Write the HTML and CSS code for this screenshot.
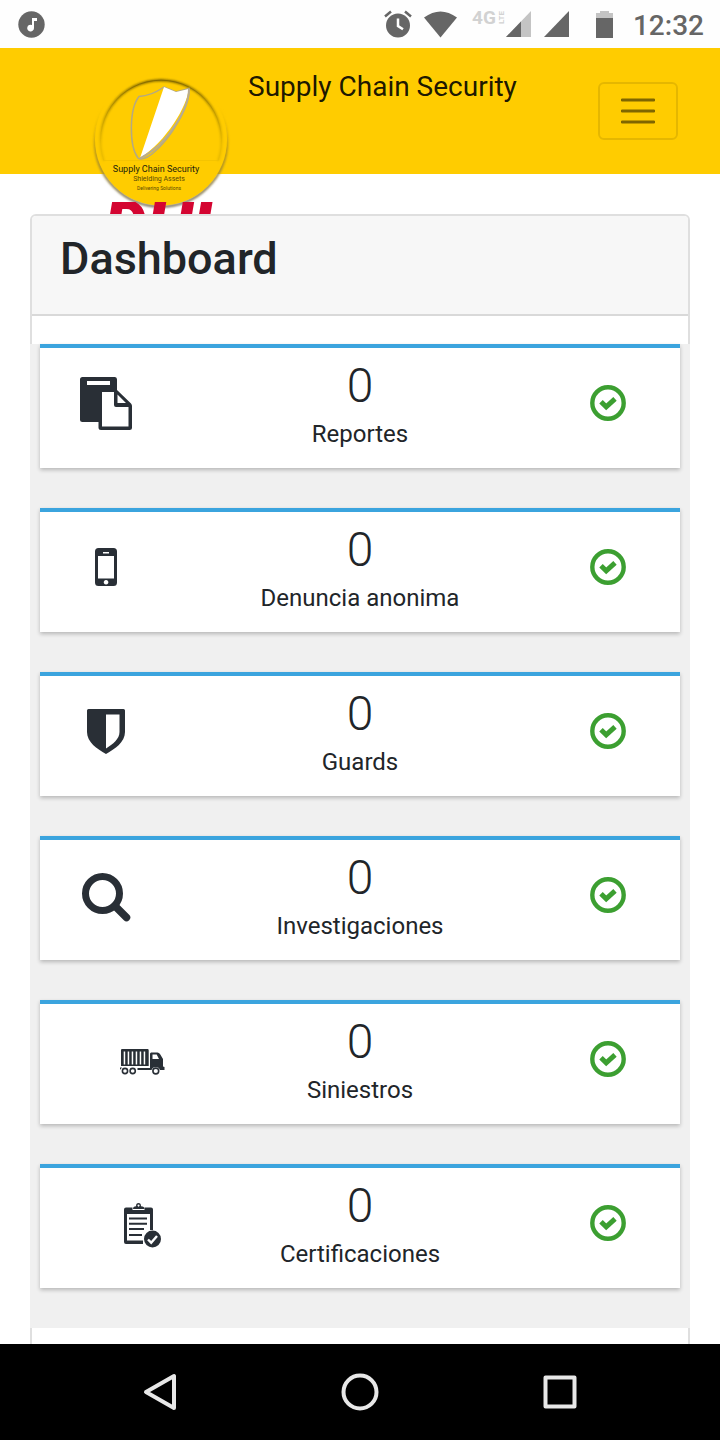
FILE: index.html
```
<!DOCTYPE html>
<html lang="es">
<head>
<meta charset="utf-8">
<meta name="viewport" content="width=device-width, initial-scale=1">
<title>Supply Chain Security</title>
<link rel="stylesheet" href="styles.css">
</head>
<body>
<svg width="0" height="0" class="sprite" aria-hidden="true">
  <symbol id="check" viewBox="0 0 36 36">
    <circle cx="18" cy="18" r="15.700" fill="none" stroke="#3c9f31" stroke-width="4.400"/>
    <path d="M11 16.800l5.200 5L25 13.800" fill="none" stroke="#3c9f31" stroke-width="5"/>
  </symbol>
</svg>

<div class="status">
  <svg class="note" viewBox="0 0 27 27"><circle cx="13.500" cy="13.500" r="13.200"/><path d="M14 7h5v3h-3v7a3.400 3.400 0 1 1-2-3z" fill="#fff"/></svg>
  <svg class="alarm" viewBox="0 0 28 28"><circle cx="14" cy="15.500" r="12"/><path d="M1 6.500L7 1.500M27 6.500L21 1.500" stroke="#666" stroke-width="2.500"/><path d="M14 8.500v7.500l5 3.200" fill="none" stroke="#fff" stroke-width="2.500"/></svg>
  <svg class="wifi" viewBox="0 0 33 27"><path d="M0 6.500Q16.500-5.500 33 6.500L16.500 26.500z"/></svg>
  <svg class="network" viewBox="0 0 34 28"><text x="0" y="14" class="net-main">4G</text><text transform="translate(32 14) rotate(-90)" class="net-sub">LTE</text></svg>
  <svg class="signal" viewBox="0 0 25 26"><path d="M25 0v26H0z" fill="#c4c4c4"/><path d="M15 10.400V26H0z"/></svg>
  <svg class="signal signal-full" viewBox="0 0 25 26"><path d="M25 0v26H0z"/></svg>
  <svg class="battery" viewBox="0 0 17 27"><path d="M0 2h4V0h9v2h4v6H0z" fill="#c4c4c4"/><path d="M0 7h17v20H0z"/></svg>
  <time class="clock">12:32</time>
</div>

<header class="topbar">
  <a href="#" class="brand" aria-label="Supply Chain Security">
    <svg class="brand-mark" viewBox="0 0 160 160">
      <defs>
        <linearGradient id="rim" x1="0" y1="0" x2="0" y2="1">
          <stop offset="0" stop-color="#6b5600"/><stop offset=".4" stop-color="#b89400"/><stop offset=".8" stop-color="#e8ba00"/>
        </linearGradient>
        <linearGradient id="edge" x1="0" y1="0" x2="0" y2="1">
          <stop offset="0" stop-color="#fc0" stop-opacity="0"/><stop offset=".2" stop-color="#fc0" stop-opacity="0"/><stop offset=".55" stop-color="#b8961a"/><stop offset="1" stop-color="#77705c"/>
        </linearGradient>
        <filter id="soft" x="-10%" y="-10%" width="120%" height="120%"><feGaussianBlur stdDeviation="1"/></filter>
      </defs>
      <circle cx="81" cy="80.500" r="66" fill="none" stroke="url(#edge)" stroke-width="2.500" filter="url(#soft)"/>
      <circle cx="81" cy="79.500" r="66" fill="#fc0"/>
      <path d="M24 101A60.500 60.500 0 1 1 138 101" fill="none" stroke="url(#rim)" stroke-width="2" filter="url(#soft)"/>
      <path d="M24 101A60.500 60.500 0 1 1 138 101" fill="none" stroke="url(#rim)" stroke-width=".6"/>
      <path d="M24 100.500h114" stroke="#efc000" stroke-width=".6"/>
      <path d="M59 36.500Q71 36 84 27L96 32L109 28.500C110 45 92 78 72 94C66 99 60 100 58 98C49 86 49 49 59 36.500z" fill="#fc0" stroke="#b5a982" stroke-width="1.500"/>
      <path d="M84 27L96 32L108.500 29C108 45 86 82 60 98z" fill="#fff"/>
      <path d="M109 29C109 47 89 84 60 98.500" fill="none" stroke="#b8ac91" stroke-width="2"/>
      <text x="76" y="112" class="brand-name">Supply Chain Security</text>
      <text x="79" y="121" class="brand-line">Shielding Assets</text>
      <text x="79" y="130" class="brand-small">Delivering Solutions</text>
    </svg>
    <span class="partner">DHL</span>
  </a>
  <span class="app-name">Supply Chain Security</span>
  <button class="menu" type="button" aria-label="Menu">
    <svg viewBox="0 0 34 26"><path d="M1 2h32M1 13h32M1 24h32" stroke="#000" stroke-opacity=".5" stroke-width="2.800" stroke-linecap="round"/></svg>
  </button>
</header>

<main class="content">
  <section class="panel">
    <h1 class="panel-title">Dashboard</h1>
    <div class="panel-body">
      <div class="tiles">
        <article class="tile">
          <span class="icon"><svg width="52" height="53" viewBox="0 0 52 53"><path fill-rule="evenodd" d="M2.500 0H35Q37 0 37 2.500V13L51 26.500Q52 27.500 52 29V50.500Q52 53 49.500 53H21Q18.500 53 18.500 50.500V45H2.500Q0 45 0 42.500V2.500Q0 0 2.500 0zM7 4v4h23V4zM22 15v34.500h26.500V30H36Q34 30 34 28V15zM37.500 17.500v8.500h8.500z"/></svg></span>
          <div class="figure"><strong>0</strong><span>Reportes</span></div>
          <svg class="ok"><use href="#check"/></svg>
        </article>
        <article class="tile">
          <span class="icon"><svg width="22" height="38" viewBox="0 0 22 38"><path fill-rule="evenodd" d="M3.500 0h15Q22 0 22 3.500v31Q22 38 18.500 38h-15Q0 38 0 34.500v-31Q0 0 3.500 0zM8 4v1.500h6V4zM3 8v22.500h16V8zM11 32a2.300 2.300 0 1 0 .1 0z"/></svg></span>
          <div class="figure"><strong>0</strong><span>Denuncia anonima</span></div>
          <svg class="ok"><use href="#check"/></svg>
        </article>
        <article class="tile">
          <span class="icon"><svg width="38" height="45" viewBox="0 0 38 45"><path fill-rule="evenodd" d="M1.500 0h35Q38 0 38 1.500V23C38 33 28 40 19 45C10 40 0 33 0 23V1.500Q0 0 1.500 0zM19 5.500V39.500C26 35 32.500 30 32.500 23V5.500z"/></svg></span>
          <div class="figure"><strong>0</strong><span>Guards</span></div>
          <svg class="ok"><use href="#check"/></svg>
        </article>
        <article class="tile">
          <span class="icon"><svg width="49" height="53" viewBox="0 0 49 53"><g fill="none" stroke="#292f36"><circle cx="20.500" cy="24.500" r="17" stroke-width="7"/><path d="M33 37l11.500 11.500" stroke-width="7.500" stroke-linecap="round"/></g></svg></span>
          <div class="figure"><strong>0</strong><span>Investigaciones</span></div>
          <svg class="ok"><use href="#check"/></svg>
        </article>
        <article class="tile">
          <span class="icon icon-inset"><svg width="45" height="26" viewBox="0 0 45 26"><path fill-rule="evenodd" d="M2 0h25.500q1.200 0 1.200 1.200V17H1V1.200Q1 0 2 0zM3.700 2.500v13h1.500v-13zM7.700 2.500v13h1.500v-13zM11.700 2.500v13h1.500v-13zM15.700 2.500v13h1.500v-13zM19.700 2.500v13h1.500v-13zM23.700 2.500v13h1.500v-13zM31 3.500h6.500q1.500 0 2.500 1.500l3 5v7.500l1.500 .5v3h-4.500a4.500 4.500 0 0 0-8.500 0H17.500v-2H30V4.500zM32.500 5.500v4.500h6.500l-2.300-4.500zM0 18.500h2l-1.500 2H0z"/><g fill="none" stroke="#292f36" stroke-width="1.600"><circle cx="5" cy="22" r="2.600"/><circle cx="12.700" cy="22" r="2.600"/><circle cx="35.800" cy="22" r="2.900"/></g></svg></span>
          <div class="figure"><strong>0</strong><span>Siniestros</span></div>
          <svg class="ok"><use href="#check"/></svg>
        </article>
        <article class="tile">
          <span class="icon icon-inset"><svg width="37" height="46" viewBox="0 0 37 46"><path fill-rule="evenodd" d="M2 4.500h6.500v2.500h12V4.500H27q2 0 2 2V27h-3V11H3v26.500h16V41H2q-2 0-2-2V6.500q0-2 2-2z"/><path fill-rule="evenodd" d="M9 6q0-2.800 3-2.800Q12 0 14.500 0T17 3.200q3.500 0 3.500 2.800zM14.500 1.500a1 1 0 1 0 .1 0z"/><path d="M5 15.500h18M5 20.700h18M5 26h15M5 32h13" stroke="#292f36" stroke-width="1.900"/><circle cx="28.500" cy="36" r="8.500"/><path d="M24 36.500l3.200 3.200L33 33" fill="none" stroke="#fff" stroke-width="2.400"/></svg></span>
          <div class="figure"><strong>0</strong><span>Certificaciones</span></div>
          <svg class="ok"><use href="#check"/></svg>
        </article>
      </div>
    </div>
  </section>
</main>

<nav class="system-nav">
  <button type="button" aria-label="Atrás"><svg viewBox="0 0 40 40"><path d="M6 20L34 4v32z"/></svg></button>
  <button type="button" aria-label="Inicio"><svg viewBox="0 0 40 40"><circle cx="20" cy="20" r="16.500"/></svg></button>
  <button type="button" aria-label="Recientes"><svg viewBox="0 0 40 40"><path d="M5.500 5.500h29v29H5.500z"/></svg></button>
</nav>
</body>
</html>
```
FILE: styles.css
```
* { box-sizing: border-box; }

body {
  margin: 0;
  height: 100vh;
  display: flex;
  flex-direction: column;
  background: #fff;
  color: #212529;
  font-family: Roboto, "Liberation Sans", sans-serif;
}

svg { display: block; flex: none; }
.sprite { position: absolute; }

button {
  margin: 0;
  padding: 0;
  border: 0;
  background: none;
  cursor: pointer;
}

/* Device status bar */
.status {
  flex: none;
  height: 48px;
  padding: 0 16px 0 18px;
  display: flex;
  align-items: center;
  background: #fefefe;
  color: #666;
  fill: #666;
}
.note { width: 27px; height: 27px; margin-right: auto; }
.alarm { width: 28px; height: 28px; margin-right: 12px; }
.wifi { width: 33px; height: 27px; margin-right: 15px; }
.network { width: 34px; height: 28px; overflow: visible; fill: #d2d2d2; }
.net-main { font-size: 19px; font-weight: 700; }
.net-sub { font-size: 8px; font-weight: 700; }
.signal { width: 25px; height: 26px; margin-right: 13px; }
.signal-full { margin-right: 27px; }
.battery { width: 17px; height: 27px; margin-right: 20px; }
.clock { font-size: 28px; font-weight: 500; line-height: 44px; padding-top: 4px; }

/* App header */
.topbar {
  flex: none;
  position: relative;
  height: 126px;
  padding: 0 42px 0 248px;
  display: flex;
  align-items: center;
  justify-content: space-between;
  background: #fc0;
}
.brand {
  position: absolute;
  z-index: 1;
  left: 80px;
  top: 12px;
  color: #d40531;
  text-decoration: none;
}
.brand-mark { width: 160px; height: 160px; }
.brand-mark text { text-anchor: middle; }
.brand-name { font-size: 9px; fill: #221e0c; }
.brand-line { font-size: 7px; fill: #5a4905; }
.brand-small { font-size: 5px; fill: #5a4905; }
/* Only the top edge of the partner logo shows above the panel */
.partner {
  position: absolute;
  left: 22px;
  top: 142px;
  height: 12px;
  padding: 0 8px 0 2px;
  overflow: hidden;
  font-size: 68px;
  font-style: italic;
  font-weight: 900;
  line-height: 48px;
}
.app-name {
  align-self: flex-start;
  padding-top: 21px;
  font-size: 28px;
  line-height: 36px;
  color: rgba(0, 0, 0, .9);
}
.menu {
  width: 80px;
  height: 58px;
  border: 2px solid rgba(0, 0, 0, .1);
  border-radius: 6px;
  display: grid;
  place-items: center;
}
.menu svg { width: 34px; height: 26px; }

/* Dashboard */
.content {
  flex: 1;
  min-height: 0;
  overflow: hidden;
  padding: 40px 30px 0;
}
.panel {
  position: relative;
  z-index: 2;
  border: 2px solid #dfdfdf;
  border-radius: 6px;
  background: #fff;
}
.panel-title {
  margin: 0;
  padding: 17px 28px 29px;
  border-bottom: 2px solid #d9d9d9;
  border-radius: 4px 4px 0 0;
  background: #f7f7f7;
  font-size: 45px;
  font-weight: 500;
  line-height: 52px;
}
.panel-body { padding: 28px 0 40px; }
.tiles {
  margin: 0 -2px;
  padding: 0 10px 40px;
  display: grid;
  gap: 40px;
  background: #f0f0f0;
}
.tile {
  height: 124px;
  border-top: 4px solid #3ba4de;
  display: grid;
  grid-template-columns: 1fr 2fr 1fr;
  background: #fff;
  box-shadow: 0 2px 4px rgba(0, 0, 0, .24);
}
.icon {
  width: 52px;
  height: 110px;
  margin-left: 40px;
  display: grid;
  place-items: center;
  fill: #292f36;
}
.icon-inset { width: 45px; height: 116px; margin-left: 80px; }
.figure {
  padding-top: 10px;
  display: flex;
  flex-direction: column;
  align-items: center;
}
.figure strong { font-size: 48px; font-weight: 300; line-height: 56px; }
.figure span { font-size: 24px; line-height: 40px; white-space: nowrap; }
.ok {
  width: 36px;
  height: 36px;
  margin: 37px 54px 0 auto;
}

/* Device navigation */
.system-nav {
  flex: none;
  height: 96px;
  padding: 0 60px;
  display: grid;
  grid-template-columns: repeat(3, 1fr);
  background: #000;
}
.system-nav button { display: grid; place-items: center; }
.system-nav svg {
  width: 40px;
  height: 40px;
  fill: none;
  stroke: #e8e8e8;
  stroke-width: 4;
  stroke-linejoin: round;
}
```
